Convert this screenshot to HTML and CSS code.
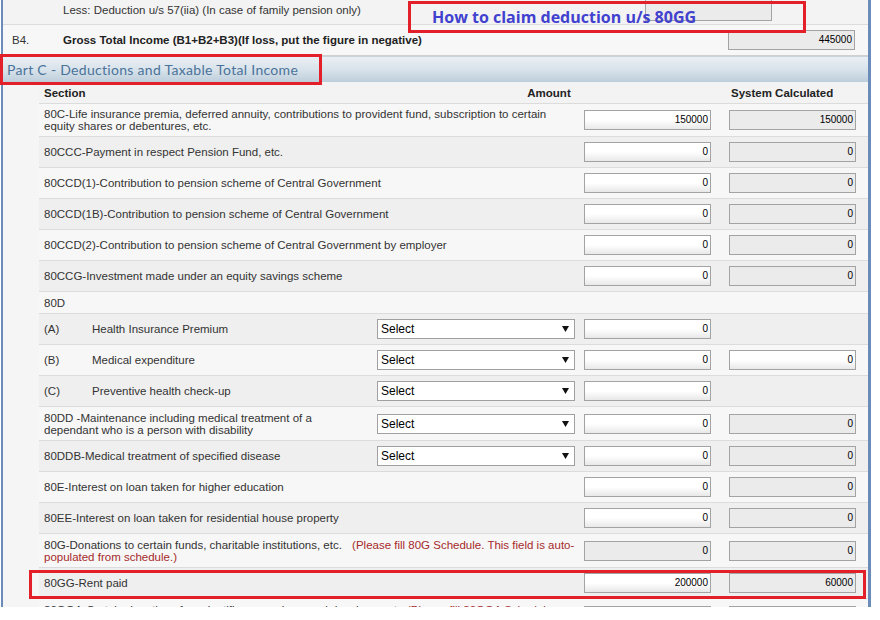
FILE: index.html
```html
<!DOCTYPE html>
<html>
<head>
<meta charset="utf-8">
<link rel="stylesheet" href="styles.css">
</head>
<body>
<div class="shot">
  <div class="page">
    <div class="top-row less">
      <div class="num"></div>
      <div class="desc">Less: Deduction u/s 57(iia) (In case of family pension only)</div>
      <div class="topbox"></div>
    </div>
    <div class="top-row b4">
      <div class="num">B4.</div>
      <div class="desc bold">Gross Total Income (B1+B2+B3)(If loss, put the figure in negative)</div>
      <div class="fld ro b4box">445000</div>
    </div>
    <div class="partbar">Part C - Deductions and Taxable Total Income</div>
    <div class="table">
      <div class="g th">
        <div class="lbl">Section</div>
        <div class="amt-h">Amount</div>
        <div class="sys-h">System Calculated</div>
      </div>
      <div class="rows">
        <div class="g r r2">
          <div class="lbl wide">80C-Life insurance premia, deferred annuity, contributions to provident fund, subscription to certain<br>equity shares or debentures, etc.</div>
          <div class="amt-cell"><div class="fld">150000</div></div>
          <div class="sys-cell"><div class="fld ro">150000</div></div>
        </div>
        <div class="g r">
          <div class="lbl wide">80CCC-Payment in respect Pension Fund, etc.</div>
          <div class="amt-cell"><div class="fld">0</div></div>
          <div class="sys-cell"><div class="fld ro">0</div></div>
        </div>
        <div class="g r">
          <div class="lbl wide">80CCD(1)-Contribution to pension scheme of Central Government</div>
          <div class="amt-cell"><div class="fld">0</div></div>
          <div class="sys-cell"><div class="fld ro">0</div></div>
        </div>
        <div class="g r">
          <div class="lbl wide">80CCD(1B)-Contribution to pension scheme of Central Government</div>
          <div class="amt-cell"><div class="fld">0</div></div>
          <div class="sys-cell"><div class="fld ro">0</div></div>
        </div>
        <div class="g r">
          <div class="lbl wide">80CCD(2)-Contribution to pension scheme of Central Government by employer</div>
          <div class="amt-cell"><div class="fld">0</div></div>
          <div class="sys-cell"><div class="fld ro">0</div></div>
        </div>
        <div class="g r">
          <div class="lbl wide">80CCG-Investment made under an equity savings scheme</div>
          <div class="amt-cell"><div class="fld">0</div></div>
          <div class="sys-cell"><div class="fld ro">0</div></div>
        </div>
        <div class="g r r80d">
          <div class="lbl wide">80D</div>
        </div>
        <div class="g r">
          <div class="lbl sub"><span class="tag">(A)</span><span>Health Insurance Premium</span></div>
          <div class="sel-cell"><div class="sel"><span>Select</span><svg width="7" height="6" viewBox="0 0 7 6"><polygon points="0,0 7,0 3.5,6" fill="#111"/></svg></div></div>
          <div class="amt-cell"><div class="fld">0</div></div>
        </div>
        <div class="g r">
          <div class="lbl sub"><span class="tag">(B)</span><span>Medical expenditure</span></div>
          <div class="sel-cell"><div class="sel"><span>Select</span><svg width="7" height="6" viewBox="0 0 7 6"><polygon points="0,0 7,0 3.5,6" fill="#111"/></svg></div></div>
          <div class="amt-cell"><div class="fld">0</div></div>
          <div class="sys-cell"><div class="fld">0</div></div>
        </div>
        <div class="g r">
          <div class="lbl sub"><span class="tag">(C)</span><span>Preventive health check-up</span></div>
          <div class="sel-cell"><div class="sel"><span>Select</span><svg width="7" height="6" viewBox="0 0 7 6"><polygon points="0,0 7,0 3.5,6" fill="#111"/></svg></div></div>
          <div class="amt-cell"><div class="fld">0</div></div>
        </div>
        <div class="g r r3">
          <div class="lbl">80DD -Maintenance including medical treatment of a<br>dependant who is a person with disability</div>
          <div class="sel-cell"><div class="sel"><span>Select</span><svg width="7" height="6" viewBox="0 0 7 6"><polygon points="0,0 7,0 3.5,6" fill="#111"/></svg></div></div>
          <div class="amt-cell"><div class="fld">0</div></div>
          <div class="sys-cell"><div class="fld ro">0</div></div>
        </div>
        <div class="g r">
          <div class="lbl">80DDB-Medical treatment of specified disease</div>
          <div class="sel-cell"><div class="sel"><span>Select</span><svg width="7" height="6" viewBox="0 0 7 6"><polygon points="0,0 7,0 3.5,6" fill="#111"/></svg></div></div>
          <div class="amt-cell"><div class="fld">0</div></div>
          <div class="sys-cell"><div class="fld ro">0</div></div>
        </div>
        <div class="g r">
          <div class="lbl wide">80E-Interest on loan taken for higher education</div>
          <div class="amt-cell"><div class="fld">0</div></div>
          <div class="sys-cell"><div class="fld ro">0</div></div>
        </div>
        <div class="g r">
          <div class="lbl wide">80EE-Interest on loan taken for residential house property</div>
          <div class="amt-cell"><div class="fld">0</div></div>
          <div class="sys-cell"><div class="fld ro">0</div></div>
        </div>
        <div class="g r r3">
          <div class="lbl wide">80G-Donations to certain funds, charitable institutions, etc. <span class="note">(Please fill 80G Schedule. This field is auto-<br>populated from schedule.)</span></div>
          <div class="amt-cell"><div class="fld ro">0</div></div>
          <div class="sys-cell"><div class="fld ro">0</div></div>
        </div>
        <div class="g r">
          <div class="lbl wide">80GG-Rent paid</div>
          <div class="amt-cell"><div class="fld">200000</div></div>
          <div class="sys-cell"><div class="fld ro">60000</div></div>
        </div>
        <div class="g r r3">
          <div class="lbl wide">80GGA-Certain donations for scientific research or rural development <span class="note">(Please fill 80GGA Schedule.<br>This field is auto-populated from schedule.)</span></div>
          <div class="amt-cell"><div class="fld ro">0</div></div>
          <div class="sys-cell"><div class="fld ro">0</div></div>
        </div>
      </div>
    </div>
  </div>
  <div class="mark mark-title">How to claim deduction u/s 80GG</div>
  <div class="mark mark-part"></div>
  <div class="mark mark-gg"></div>
</div>
</body>
</html>
```
FILE: styles.css
```css
body {
  margin: 0;
  background: #fff;
  font-family: "Liberation Sans", Arial, sans-serif;
  font-size: 11.5px;
  color: #333;
}
.shot {
  position: relative;
  width: 880px;
  height: 620px;
}
.page {
  margin-left: 1px;
  width: 865px;
  height: 607px;
  border-left: 2px solid #6b8cba;
  border-right: 3px solid #6b8cba;
  background: #f5f5f5;
  overflow: hidden;
}
.top-row {
  display: flex;
  border-bottom: 1px solid #dcdcdc;
}
.top-row .num {
  width: 51px;
  padding-left: 9px;
  flex: none;
}
.top-row .desc {
  flex: 1;
  white-space: nowrap;
}
.bold {
  font-weight: bold;
  color: #222;
}
.less {
  height: 24px;
  background: #f3f3f3;
  align-items: flex-start;
}
.less .desc {
  padding-top: 3px;
  line-height: 14px;
}
.topbox {
  width: 127px;
  height: 22px;
  margin-top: -1px;
  margin-right: 96px;
  box-sizing: border-box;
  border: 1px solid #a3a3a3;
  background: #ebebeb;
  flex: none;
}
.b4 {
  height: 30px;
  background: #f7f7f7;
  align-items: center;
  border-bottom-color: #d0d0d0;
}
.b4box {
  width: 125px;
  height: 21px;
  margin-right: 13px;
  flex: none;
}
.partbar {
  height: 25px;
  border-top: 1px solid #c9d4dd;
  background: linear-gradient(#eaeff4, #d9e3eb 50%, #bdcedb);
  padding-left: 4px;
  line-height: 25px;
  color: #4a739a;
  font-family: Lato, "Open Sans", sans-serif;
  font-size: 14px;
  letter-spacing: 0.3px;
}
.table {
  padding-left: 36px;
}
.g {
  display: grid;
  grid-template-columns: 334px 207px 145px 143px;
  align-items: center;
}
.th {
  height: 21px;
  border-bottom: 1px solid #dcdcdc;
  background: #f3f3f3;
  font-weight: bold;
  color: #222;
}
.amt-h {
  grid-column: 2 / 4;
  text-align: center;
}
.sys-h {
  grid-column: 4;
  padding-left: 6px;
}
.lbl {
  grid-column: 1;
  padding-left: 5px;
  line-height: 12px;
  white-space: nowrap;
}
.lbl.wide {
  grid-column: 1 / 3;
}
.r {
  height: 30px;
  border-bottom: 1px solid #dcdcdc;
}
.rows > .r:nth-child(odd) {
  background: #f7f7f7;
}
.rows > .r:nth-child(even) {
  background: #efefef;
}
.r2 {
  height: 32px;
}
.r3 {
  height: 33px;
}
.r80d {
  height: 21px;
}
.sub {
  display: flex;
}
.tag {
  width: 48px;
  flex: none;
}
.note {
  color: #a52a2a;
  margin-left: 7px;
}
.sel-cell {
  grid-column: 2;
  padding-left: 4px;
}
.amt-cell {
  grid-column: 3;
  padding-left: 4px;
}
.sys-cell {
  grid-column: 4;
  padding-left: 4px;
}
.fld {
  width: 127px;
  height: 20px;
  box-sizing: border-box;
  border: 1px solid #a3a3a3;
  background: linear-gradient(#fff, #fff 50%, #e8e8e8);
  font-size: 10px;
  line-height: 18px;
  color: #000;
  text-align: right;
  padding-right: 2px;
}
.fld.ro {
  background: #ebebeb;
}
.sel {
  width: 198px;
  height: 20px;
  box-sizing: border-box;
  border: 1px solid #a0a0a0;
  background: #fff;
  display: flex;
  align-items: center;
  justify-content: space-between;
  padding: 0 5px 0 3px;
  color: #000;
  font-size: 12px;
}
.mark {
  position: absolute;
  box-sizing: border-box;
  border: 3px solid #e3202a;
}
.mark-title {
  left: 408px;
  top: 1px;
  width: 398px;
  height: 32px;
  padding-left: 21px;
  line-height: 26px;
  color: #4141cf;
  font-family: "Open Sans", sans-serif;
  font-weight: 700;
  font-size: 16px;
}
.mark-part {
  left: 0;
  top: 54px;
  width: 322px;
  height: 31px;
}
.mark-gg {
  left: 29px;
  top: 570px;
  width: 837px;
  height: 29px;
}
```
